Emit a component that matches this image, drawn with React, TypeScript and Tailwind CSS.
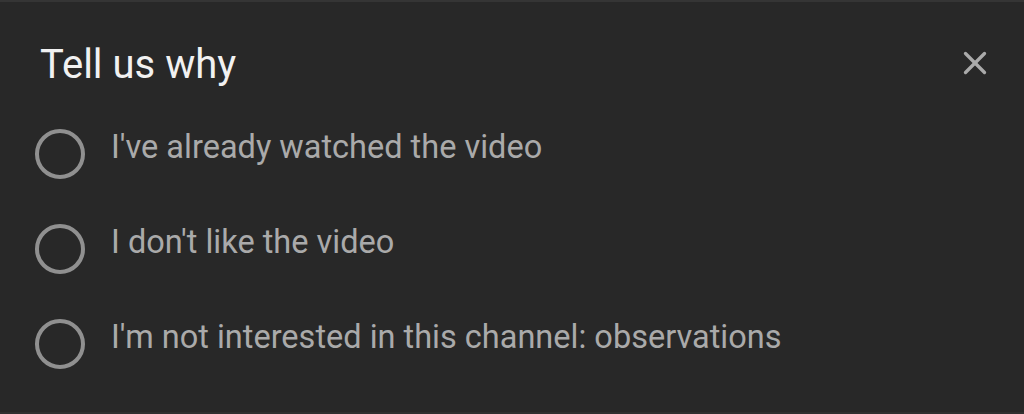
import { X } from "lucide-react";

const reasons = [
  "I've already watched the video",
  "I don't like the video",
  "I'm not interested in this channel: observations",
];

const App: React.FC = () => {
  return (
    <div
      className="w-[1024px] h-[414px] bg-[#282828] border-t-2 border-b-2 border-t-[#353535] border-b-[#303030] overflow-hidden"
      style={{ fontFamily: "Roboto, 'Noto Sans', sans-serif" }}
    >
      <div className="flex items-center justify-between pl-[40px] pr-[30px] pt-[40px] h-[86px]">
        <h1 className="text-[40px] leading-[46px] text-[#f1f1f1] font-normal">
          Tell us why
        </h1>
        <button className="text-[#aaaaaa] mt-[-4px]">
          <X size={38} strokeWidth={2.1} />
        </button>
      </div>

      <div className="flex flex-col pl-[35px] pt-[18px]">
        {reasons.map((reason) => {
          return (
            <label key={reason} className="flex items-center h-[95px] cursor-pointer">
              <span className="w-[50px] h-[50px] rounded-full border-[4px] border-[#909090] shrink-0" />
              <span className="ml-[26px] pb-[13px] text-[32.5px] leading-[40px] text-[#aaaaaa]">
                {reason}
              </span>
            </label>
          );
        })}
      </div>
    </div>
  );
};

export default App;
